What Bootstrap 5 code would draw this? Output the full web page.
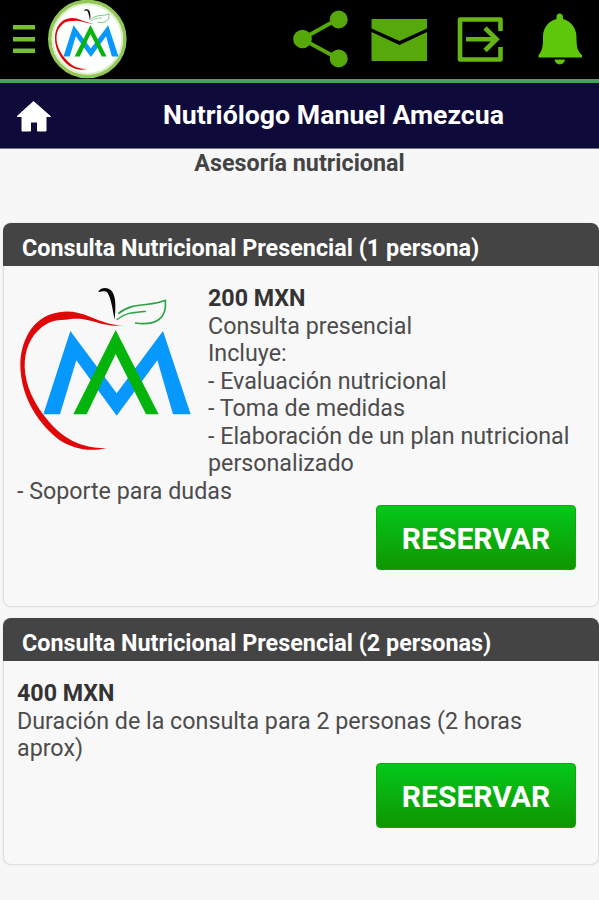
<!DOCTYPE html>
<html lang="es">
<head>
<meta charset="utf-8">
<meta name="viewport" content="width=device-width, initial-scale=1">
<title>Nutriólogo Manuel Amezcua</title>
<link href="https://cdn.jsdelivr.net/npm/bootstrap@5.3.0/dist/css/bootstrap.min.css" rel="stylesheet">
<style>
  body { font-family: Roboto, "Liberation Sans", sans-serif; font-size: 23.25px; line-height: 27.5px; color: #4c4c4c; background: #f7f7f7; overflow: hidden; }
  .topbar { height: 83px; background: #000; border-bottom: 4px solid #3fa557; }
  .titlebar { height: 66px; background: #0e0a3a; border-bottom: 1px solid #77777f; color: #fff; font-size: 26.7px; font-weight: 700; }
  .titlebar svg { margin-left: 16px; }
  .page-title { padding-left: 16px; }
  .subtitle { padding-top: 1px; font-size: 23.3px; font-weight: 700; height: 74px; color: #444; }
  .service { margin: 0 0 11px 3px; height: 384px; background: #f8f8f8; border: 1px solid #dfdfdf; border-radius: 8px; box-shadow: 0 0 2px #ddd; color: inherit; }
  .service-short { height: 247px; }
  .service > .card-header { height: 43px; margin: -1px -1px 0; padding: 12px 19px 0; background: #444; color: #fff; font-size: 23.35px; font-weight: 700; border: 0; border-radius: 8px 8px 0 0; white-space: nowrap; }
  .service > .card-body { padding: 19px 13px 0; }
  .price { font-weight: 700; color: #333; }
  .apple { width: 191px; height: 190px; }
  .btn-reserve { width: 200px; height: 65px; margin-right: 9px; padding-top: 8px; border: 1px solid #12a512; border-radius: 4px; background: linear-gradient(#04c81a, #109600); color: #fff; font-size: 30px; font-weight: 700; }
</style>
</head>
<body>
<svg class="d-none" xmlns="http://www.w3.org/2000/svg">
  <symbol id="logo" viewBox="0 0 630 570" overflow="visible">
    <path fill="#df0707" d="M371 167C330 170 300 160 275 153C235 142 215 148 195 149C165 150 145 155 125 172C90 200 74 240 74 290C76 350 105 400 130 434C175 492 225 535 320 534C265 547 220 536 178 510C125 470 60 390 61 280C63 215 95 150 155 132C195 118 232 124 270 140C305 155 335 165 371 167Z"/>
    <path fill="#0698fc" d="M130 433L211 183L350 370L489 183L572 433H519L472 271L350 437L229 271L180 433Z"/>
    <path fill="#04b40c" d="M220 433L347 180L476 433H438L347 252L260 433Z"/>
    <path fill="#080808" d="M296 63C305 49 328 52 337 65C350 87 346 120 344 149C338 125 335 85 321 66C315 61 306 65 296 66Z"/>
    <path fill="none" stroke="#2ca344" stroke-width="5" stroke-linejoin="round" d="M355 131C400 93 450 112 496 91C501 145 470 168 405 159"/>
    <path fill="none" stroke="#2ca344" stroke-width="4" d="M350 149C375 128 400 127 438 124"/>
  </symbol>
</svg>

<header class="topbar">
  <svg class="d-block" width="599" height="79" viewBox="0 0 599 79">
    <path fill="#78c030" d="M13 25h22v4.5H13zM13 37h22v4.5H13zM13 48.500h22v4.500H13z"/>
    <circle cx="87.300" cy="39" r="37.500" fill="#fcfffb" stroke="#93c858" stroke-width="3.600"/>
    <circle cx="87.300" cy="39" r="34.800" fill="none" stroke="#dceec6" stroke-width="1.800"/>
    <use href="#logo" x="47.300" y="2.500" width="78.400" height="71"/>
    <g fill="#57a90b">
      <path fill="none" stroke="#57a90b" stroke-width="3.800" d="M338 19L302 39L338 58.500"/>
      <circle cx="338.700" cy="19.500" r="9"/><circle cx="302.500" cy="39" r="9.300"/><circle cx="338.700" cy="58.500" r="9"/>
      <path d="M371.500 19H427V28.500L399.500 41L371.500 28.500ZM371.500 32L399.500 45L427 32V61H371.500Z"/>
    </g>
    <path fill="none" stroke="#66b516" stroke-width="4.600" stroke-linejoin="round" d="M500.500 31V19.500H460V59.500H500.500V47"/>
    <path fill="none" stroke="#66b516" stroke-width="4.600" d="M466 39.200H496M485 28L496.500 39.200L485 50.500"/>
    <path fill="#5ec60b" d="M559.500 13.500C561.500 13.500 563 15 563 17.500V19C571 21 576.500 28 576.500 37C576.500 46 577 51 582 55V57.500H538.500V55C542.500 51 543 46 543 37C543 28 548 21 556.500 19V17.500C556.500 15 557.500 13.500 559.500 13.500ZM554.500 59.500H565C564 66 555.500 66 554.500 59.500Z"/>
  </svg>
</header>

<div class="titlebar d-flex align-items-center">
  <svg width="36" height="34" viewBox="0 0 36 34"><path fill="#fff" stroke="#fff" stroke-width="1" stroke-linejoin="round" d="M17.500 2.500L34.500 17.500H30V32H21.500V23H14.500V32H6V17.500H1Z"/></svg>
  <div class="page-title flex-grow-1 text-center">Nutriólogo Manuel Amezcua</div>
</div>

<main>
  <div class="subtitle text-center">Asesoría nutricional</div>

  <section class="card service">
    <div class="card-header">Consulta Nutricional Presencial (1 persona)</div>
    <div class="card-body">
      <svg class="apple float-start" viewBox="51 45 573 570"><use href="#logo" width="630" height="570"/></svg>
      <div class="price">200 MXN</div>
      Consulta presencial<br>
      Incluye:<br>
      - Evaluación nutricional<br>
      - Toma de medidas<br>
      - Elaboración de un plan nutricional personalizado<br>
      - Soporte para dudas
      <div class="d-flex justify-content-end"><button type="button" class="btn btn-reserve">RESERVAR</button></div>
    </div>
  </section>

  <section class="card service service-short">
    <div class="card-header">Consulta Nutricional Presencial (2 personas)</div>
    <div class="card-body">
      <div class="price">400 MXN</div>
      Duración de la consulta para 2 personas (2 horas aprox)
      <div class="d-flex justify-content-end"><button type="button" class="btn btn-reserve">RESERVAR</button></div>
    </div>
  </section>
</main>
<script src="https://cdn.jsdelivr.net/npm/bootstrap@5.3.0/dist/js/bootstrap.bundle.min.js"></script>
</body>
</html>
